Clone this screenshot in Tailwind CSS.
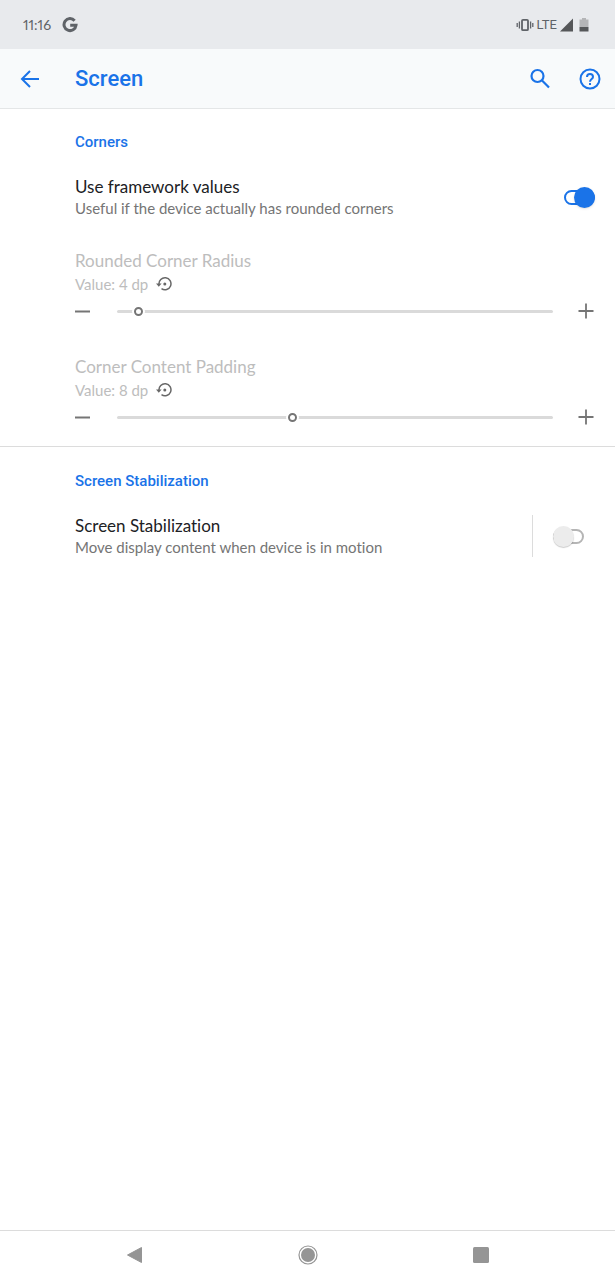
<!DOCTYPE html>
<html lang="en">
<head>
    <meta charset="UTF-8">
    <meta name="viewport" content="width=device-width, initial-scale=1.0">
    <title>Screen</title>
    <script src="https://cdn.jsdelivr.net/npm/@tailwindcss/browser@4"></script>
</head>
<body class="flex min-h-screen flex-col bg-white font-['Lato','Roboto',sans-serif] text-[#757575] [font-variant-ligatures:none]">
    <!-- Status bar -->
    <div class="flex h-[49px] items-center justify-between bg-[#e8eaed] pr-[26px] pl-[23px] text-[#5f6368]">
        <div class="flex items-center gap-[11px]">
            <span class="text-sm proportional-nums">11:16</span>
            <svg class="size-4" viewBox="0 0 16 16" fill="none" stroke="currentColor" stroke-width="3" aria-hidden="true">
                <path d="M12.6 3.7A6 6 0 1 0 14 8.3H8.2"/>
            </svg>
        </div>
        <div class="flex items-center">
            <svg class="h-4 w-[18px]" viewBox="0 0 18 16" fill="none" stroke="currentColor" aria-hidden="true">
                <rect x="6" y="2.8" width="6" height="10.400" rx="1" stroke-width="1.800"/>
                <path stroke-width="1.300" d="M1.200 6v4M3.400 4.500v7M14.600 4.500v7M16.800 6v4"/>
            </svg>
            <span class="ml-[3px] font-['Roboto',sans-serif] text-[13px]">LTE</span>
            <svg class="ml-[2px] size-[14px]" viewBox="0 0 14 14" aria-hidden="true">
                <path fill="#555759" d="M14 .5v13H1z"/>
            </svg>
            <svg class="ml-[6px] h-[14px] w-[10px]" viewBox="0 0 10 14" aria-hidden="true">
                <path fill="#b4b5b7" d="M3 0h4v1.500h2.500v7.500h-9V1.500H3z"/>
                <path fill="#555759" d="M.5 9h9v4.500h-9z"/>
            </svg>
        </div>
    </div>

    <!-- App bar -->
    <header class="flex h-[60px] items-center border-b border-[#e4e6e7] bg-[#f8fafb] pr-[13px] pl-[18px] text-[#1a73e8]">
        <button type="button" aria-label="Back">
            <svg class="size-6" viewBox="0 0 24 24" fill="none" stroke="currentColor" stroke-width="2">
                <path d="M21 12H4.500M12 4l-8 8 8 8"/>
            </svg>
        </button>
        <h1 class="ml-[33px] flex-1 font-['Roboto',sans-serif] text-[22px] leading-7 font-medium">Screen</h1>
        <button type="button" aria-label="Search">
            <svg class="size-6" viewBox="0 0 24 24" fill="none" stroke="currentColor" stroke-width="2.200">
                <circle cx="9.500" cy="9" r="6"/>
                <path d="M13.800 13.300l7.200 7.200"/>
            </svg>
        </button>
        <button type="button" aria-label="Help" class="ml-[26px]">
            <svg class="size-6" viewBox="0 0 24 24" fill="none" stroke="currentColor" stroke-width="2">
                <circle cx="12" cy="12" r="9.500"/>
                <path d="M9 10a3 3 0 1 1 6 0c0 2-3 2.200-3 4.800"/>
                <path d="M12 16v2"/>
            </svg>
        </button>
    </header>

    <main class="flex-1">
        <section class="border-b border-[#dcdcdc] pt-[23px] pb-[14px] pl-[75px]">
            <h2 class="font-['Roboto',sans-serif] text-[15px] leading-5 font-medium text-[#1a73e8]">Corners</h2>

            <div class="mt-6 flex items-center justify-between pr-5">
                <label for="framework">
                    <span class="block text-[17px] leading-[22px] text-[#202124]">Use framework values</span>
                    <span class="block text-[15px] leading-5">Useful if the device actually has rounded corners</span>
                </label>
                <input id="framework" type="checkbox" role="switch" checked class="relative h-[15px] w-[31px] appearance-none rounded-full border-2 border-[#1a73e8] before:absolute before:-top-[5px] before:-right-[2px] before:size-[21px] before:rounded-full before:bg-[#1a73e8] before:shadow-sm">
            </div>

            <div class="mt-8 pr-[21px]">
                <label for="radius" class="block text-[17px] leading-[22px] text-[#bdbdbd]">Rounded Corner Radius</label>
                <div class="flex h-6 items-center gap-2 text-[15px] text-[#bdbdbd]">
                    <span>Value: 4 dp</span>
                    <button type="button" aria-label="Reset radius" class="text-[#686868]">
                        <svg class="size-4" viewBox="0 0 16 16" fill="none" stroke="currentColor" stroke-width="1.500">
                            <path d="M3 8.500A6 6 0 1 1 5.500 12.700"/>
                            <path fill="currentColor" stroke="none" d="M0 7.500h5.600L2.800 10.800z"/>
                            <circle cx="8.800" cy="8" r="1.500" fill="currentColor" stroke="none"/>
                        </svg>
                    </button>
                </div>
                <div class="flex h-[30px] items-center">
                    <button type="button" aria-label="Decrease radius" class="text-[#757575]">
                        <svg class="size-[15px]" viewBox="0 0 15 15" fill="none" stroke="currentColor" stroke-width="2"><path d="M0 7.500h15"/></svg>
                    </button>
                    <input id="radius" type="range" min="0" max="100" value="4" class="mr-[25px] ml-[27px] h-[9px] min-w-0 flex-1 appearance-none bg-transparent [&::-webkit-slider-runnable-track]:h-[3px] [&::-webkit-slider-runnable-track]:rounded-full [&::-webkit-slider-runnable-track]:bg-[#dadada] [&::-webkit-slider-thumb]:-mt-[3px] [&::-webkit-slider-thumb]:size-[9px] [&::-webkit-slider-thumb]:appearance-none [&::-webkit-slider-thumb]:rounded-full [&::-webkit-slider-thumb]:border-2 [&::-webkit-slider-thumb]:border-[#757575] [&::-webkit-slider-thumb]:bg-white [&::-webkit-slider-thumb]:shadow-[0_0_0_2px_white]">
                    <button type="button" aria-label="Increase radius" class="text-[#757575]">
                        <svg class="size-4" viewBox="0 0 16 16" fill="none" stroke="currentColor" stroke-width="1.800"><path d="M.5 8h15M8 .5v15"/></svg>
                    </button>
                </div>
            </div>

            <div class="mt-[30px] pr-[21px]">
                <label for="padding" class="block text-[17px] leading-[22px] text-[#bdbdbd]">Corner Content Padding</label>
                <div class="flex h-6 items-center gap-2 text-[15px] text-[#bdbdbd]">
                    <span>Value: 8 dp</span>
                    <button type="button" aria-label="Reset padding" class="text-[#686868]">
                        <svg class="size-4" viewBox="0 0 16 16" fill="none" stroke="currentColor" stroke-width="1.500">
                            <path d="M3 8.500A6 6 0 1 1 5.500 12.700"/>
                            <path fill="currentColor" stroke="none" d="M0 7.500h5.600L2.800 10.800z"/>
                            <circle cx="8.800" cy="8" r="1.500" fill="currentColor" stroke="none"/>
                        </svg>
                    </button>
                </div>
                <div class="flex h-[30px] items-center">
                    <button type="button" aria-label="Decrease padding" class="text-[#757575]">
                        <svg class="size-[15px]" viewBox="0 0 15 15" fill="none" stroke="currentColor" stroke-width="2"><path d="M0 7.500h15"/></svg>
                    </button>
                    <input id="padding" type="range" min="0" max="20" value="8" class="mr-[25px] ml-[27px] h-[9px] min-w-0 flex-1 appearance-none bg-transparent [&::-webkit-slider-runnable-track]:h-[3px] [&::-webkit-slider-runnable-track]:rounded-full [&::-webkit-slider-runnable-track]:bg-[#dadada] [&::-webkit-slider-thumb]:-mt-[3px] [&::-webkit-slider-thumb]:size-[9px] [&::-webkit-slider-thumb]:appearance-none [&::-webkit-slider-thumb]:rounded-full [&::-webkit-slider-thumb]:border-2 [&::-webkit-slider-thumb]:border-[#757575] [&::-webkit-slider-thumb]:bg-white [&::-webkit-slider-thumb]:shadow-[0_0_0_2px_white]">
                    <button type="button" aria-label="Increase padding" class="text-[#757575]">
                        <svg class="size-4" viewBox="0 0 16 16" fill="none" stroke="currentColor" stroke-width="1.800"><path d="M.5 8h15M8 .5v15"/></svg>
                    </button>
                </div>
            </div>
        </section>

        <section class="pt-6 pl-[75px]">
            <h2 class="font-['Roboto',sans-serif] text-[15px] leading-5 font-medium text-[#1a73e8]">Screen Stabilization</h2>
            <div class="mt-6 flex items-center justify-between pr-[31px]">
                <label for="stabilization">
                    <span class="block text-[17px] leading-[22px] text-[#202124]">Screen Stabilization</span>
                    <span class="block text-[15px] leading-5">Move display content when device is in motion</span>
                </label>
                <div class="flex h-[42px] items-center border-l border-[#dcdcdc] pl-5">
                    <input id="stabilization" type="checkbox" role="switch" class="relative h-[15px] w-[31px] appearance-none rounded-full border-2 border-[#b5b5b5] before:absolute before:-top-[5px] before:-left-[2px] before:size-[21px] before:rounded-full before:bg-[#ececec] before:shadow-[0_1px_1px_rgba(0,0,0,0.2)]">
                </div>
            </div>
        </section>
    </main>

    <!-- Navigation bar -->
    <nav class="flex h-[50px] items-center justify-around border-t border-[#dcdcdc] px-12 pb-[2px] text-[#959595]">
        <button type="button" aria-label="Back">
            <svg class="size-5" viewBox="0 0 20 20" fill="currentColor"><path d="M16.500 2.500v15L2.500 10z" stroke="currentColor" stroke-linejoin="round"/></svg>
        </button>
        <button type="button" aria-label="Home">
            <svg class="size-5" viewBox="0 0 20 20"><circle cx="10" cy="10" r="9" fill="none" stroke="currentColor" stroke-width="1.200"/><circle cx="10" cy="10" r="7" fill="currentColor"/></svg>
        </button>
        <button type="button" aria-label="Recent apps">
            <svg class="size-5" viewBox="0 0 20 20" fill="currentColor"><rect x="2" y="2" width="16" height="16" rx="1.500"/></svg>
        </button>
    </nav>
</body>
</html>
